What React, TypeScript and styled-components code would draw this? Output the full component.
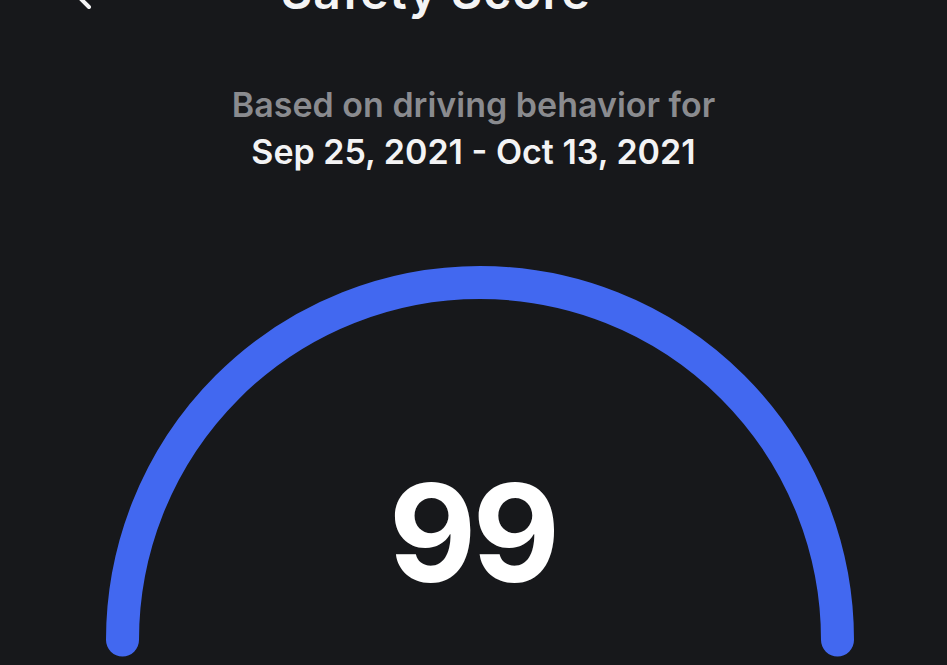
import React from "react";
import styled, { createGlobalStyle } from "styled-components";

const GlobalStyle = createGlobalStyle`
  html, body {
    margin: 0;
    padding: 0;
    background: #17181b;
    overflow: hidden;
  }
  body {
    font-family: Inter, "Noto Sans", "Liberation Sans", sans-serif;
    -webkit-font-smoothing: antialiased;
  }
`;

const Screen = styled.div`
  width: 947px;
  height: 665px;
  display: flex;
  flex-direction: column;
  align-items: center;
  background: #17181b;
  overflow: hidden;
`;

const Header = styled.div`
  align-self: stretch;
  display: flex;
  align-items: center;
  margin-top: -32px;
  padding-left: 72px;
  height: 48px;
`;

const BackButton = styled.button`
  display: flex;
  margin-top: 6px;
  padding: 0;
  border: 0;
  background: none;
  cursor: pointer;
`;

const Title = styled.h1`
  margin: 0 0 0 187px;
  font-size: 48px;
  line-height: 1;
  font-weight: 600;
  color: #f4f4f5;
  letter-spacing: 1px;
`;

const Period = styled.div`
  margin-top: 65px;
  text-align: center;
  font-size: 34px;
  line-height: 47px;
  font-weight: 600;
`;

const PeriodLine = styled.div<{ $muted?: boolean }>`
  color: ${(p) => (p.$muted ? "#8a8b8f" : "#f3f3f4")};
`;

const Gauge = styled.div`
  display: grid;
  margin-top: 90px;
  margin-left: 12px;
`;

const Arc = styled.svg`
  grid-area: 1 / 1;
  display: block;
`;

const Score = styled.div`
  grid-area: 1 / 1;
  justify-self: center;
  align-self: start;
  margin-top: 201px;
  margin-right: 14px;
  font-size: 135px;
  line-height: 1;
  font-weight: 700;
  color: #ffffff;
  letter-spacing: -4px;
`;

function ScoreGauge({ score }: { score: number }) {
  const cx = 376;
  const cy = 375;
  const r = 357.5;
  return (
    <Gauge>
      <Arc width={752} height={393} viewBox="0 0 752 393">
        <path
          d={`M ${cx - r} ${cy} A ${r} ${r} 0 0 1 ${cx + r} ${cy}`}
          fill="none"
          stroke="#4268f0"
          strokeWidth={33}
          strokeLinecap="round"
        />
      </Arc>
      <Score>{score}</Score>
    </Gauge>
  );
}

export default function App() {
  return (
    <Screen>
      <GlobalStyle />
      <Header>
        <BackButton aria-label="Back">
          <svg width="22" height="32" viewBox="0 0 22 32">
            <path
              d="M17 2 L4 15 L17 28"
              fill="none"
              stroke="#f4f4f5"
              strokeWidth={4}
              strokeLinecap="round"
              strokeLinejoin="round"
            />
          </svg>
        </BackButton>
        <Title>Safety Score</Title>
      </Header>
      <Period>
        <PeriodLine $muted>Based on driving behavior for</PeriodLine>
        <PeriodLine>Sep 25, 2021 - Oct 13, 2021</PeriodLine>
      </Period>
      <ScoreGauge score={99} />
    </Screen>
  );
}
